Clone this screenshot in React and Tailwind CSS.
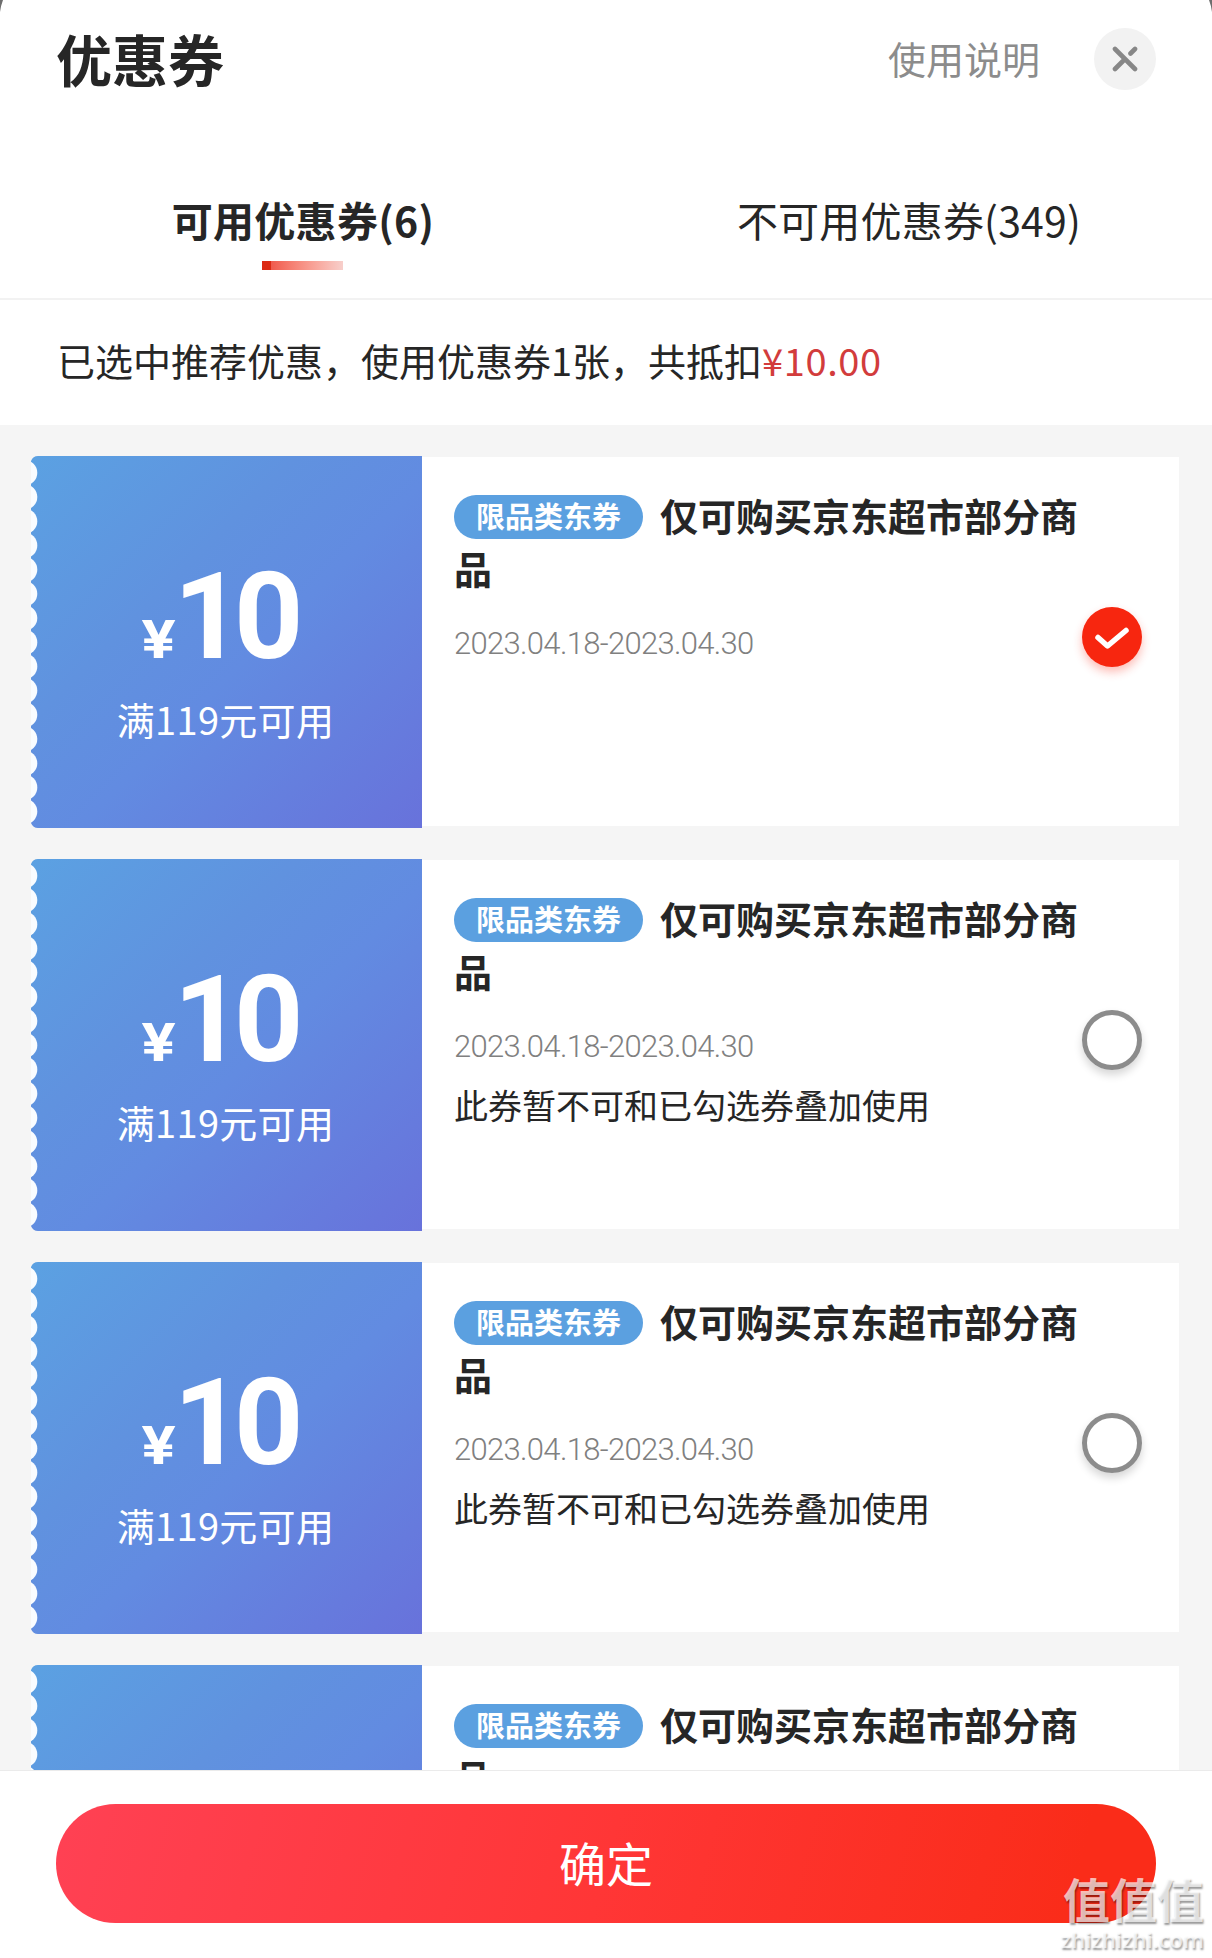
import React, { useState } from "react";

const COUPONS = [
  { id: 1, amount: 10, limit: "满119元可用", note: "" },
  { id: 2, amount: 10, limit: "满119元可用", note: "此券暂不可和已勾选券叠加使用" },
  { id: 3, amount: 10, limit: "满119元可用", note: "此券暂不可和已勾选券叠加使用" },
  { id: 4, amount: 10, limit: "满119元可用", note: "此券暂不可和已勾选券叠加使用" },
];

const NOTCHES = Array.from({ length: 15 }, (_, i) => 16.8 + i * 24.2);

export default function App() {
  const [selected, setSelected] = useState(1);

  return (
    <div className="relative flex h-[1958px] w-[1212px] flex-col overflow-hidden bg-white font-['Noto_Sans_CJK_SC',sans-serif] text-[#262626]">
      <SheetCorners />
      <Header />
      <Tabs />
      <div className="flex h-[125px] shrink-0 items-center pb-[5px] pl-[57px] text-[38px] leading-none">
        <span>已选中推荐优惠，使用优惠券1张，共抵扣</span>
        <span className="tracking-[0.6px] text-[#d23c3c]">¥10.00</span>
      </div>
      <div className="flex h-[1345px] shrink-0 flex-col gap-[31px] overflow-hidden bg-[#f5f5f5] pt-[31px] pr-[33px] pl-[31px]">
        {COUPONS.map((c) => (
          <Coupon key={c.id} coupon={c} checked={selected === c.id} onSelect={() => setSelected(c.id)} />
        ))}
      </div>
      <div className="flex h-[188px] shrink-0 flex-col border-t border-[#ebebeb] px-[56px] pt-[33px]">
        <button className="h-[119px] rounded-full bg-linear-[105deg,#ff4154,#ff3636_50%,#fa2c19_92%] pb-[5px] text-[47px] leading-none text-white">
          确定
        </button>
      </div>
      <Watermark />
    </div>
  );
}

function SheetCorners() {
  return (
    <>
      <svg className="absolute top-0 left-0 h-3 w-[3px]" viewBox="0 0 3 12">
        <path d="M0 0h3Q1 5 0 12z" fill="#6e6e6e" />
      </svg>
      <svg className="absolute top-0 right-0 h-3 w-[3px]" viewBox="0 0 3 12">
        <path d="M3 0H0Q2 5 3 12z" fill="#6e6e6e" />
      </svg>
    </>
  );
}

function Header() {
  return (
    <div className="flex h-[118px] shrink-0 items-center pr-[56px] pl-[56px]">
      <h1 className="pb-0.5 text-[56px] leading-none font-bold">优惠券</h1>
      <span className="ml-auto pb-0.5 text-[38px] leading-none text-[#8c8c8c]">使用说明</span>
      <button className="ml-[54px] flex size-[62px] items-center justify-center rounded-full bg-[#f2f2f2]">
        <svg className="size-[26px]" viewBox="0 0 26 26" fill="none" stroke="#878787" strokeWidth="4.6" strokeLinecap="round">
          <path d="M3 3l20 20M3 23l10-10M18.5 7.5L23 3" />
        </svg>
      </button>
    </div>
  );
}

function Tabs() {
  return (
    <div className="grid h-[182px] shrink-0 grid-cols-2 border-b-2 border-[#f2f2f2] text-[41px] leading-none">
      <div className="flex flex-col items-center pt-[81px] font-bold">
        <span className="tracking-[0.3px]">可用优惠券(6)</span>
        <span className="mt-[21px] mr-px h-[9px] w-[81px] bg-linear-to-r from-[#dc2a14] from-11% via-[#f0594c] via-11% to-[#f7cfcb]" />
      </div>
      <div className="flex flex-col items-center pt-[81px]">
        <span className="tracking-[0.2px]">不可用优惠券(349)</span>
      </div>
    </div>
  );
}

function Coupon({ coupon, checked, onSelect }) {
  return (
    <div className="flex h-[372px] shrink-0">
      <div className="relative flex w-[391px] shrink-0 flex-col items-center bg-linear-[135deg,#5ba1e2,#6092df_35%,#628be1_55%,#6872db]">
        <TicketEdge />
        <div className="mt-[101px] flex items-baseline pr-[18px] font-[Roboto] font-bold text-white">
          <span className="mr-px ml-[3px] inline-block scale-x-[1.18] text-[54px] leading-none">¥</span>
          <span className="text-[121px] leading-[121px] tracking-[-9px]">{coupon.amount}</span>
        </div>
        <div className="mt-[22px] mr-0.5 text-[38px] leading-none tracking-[0.3px] text-white">{coupon.limit}</div>
      </div>
      <div className="mt-px mb-[2px] flex grow bg-white pl-8">
        <div className="w-[640px] pt-[31px]">
          <div className="text-[38px] leading-[53px] font-bold">
            <span className="mr-[17px] inline-flex h-[44px] w-[189px] items-center justify-center rounded-full bg-[#5ba0e0] pb-0.5 align-[3px] text-[29px] leading-none text-white">
              限品类东券
            </span>
            仅可购买京东超市部分商品
          </div>
          <div className="mt-[31px] font-[Roboto] text-[31px] leading-[38px] font-light tracking-[-0.67px] text-[#808080]">
            2023.04.18-2023.04.30
          </div>
          <div className="mt-[15px] text-[34px] leading-[48px]">{coupon.note}</div>
        </div>
        <button onClick={onSelect} className="mt-[150px] -ml-3 size-[60px] rounded-full">
          {checked ? <CheckedDot /> : <span className="block size-[60px] rounded-full border-[5px] border-[#8c8c8c] shadow-[0_5px_9px_rgba(0,0,0,0.16)]" />}
        </button>
      </div>
    </div>
  );
}

// scalloped left side of the ticket
function TicketEdge() {
  return (
    <svg className="absolute top-0 left-0 h-[372px] w-[7px]" viewBox="0 0 7 372">
      <path d="M0 0h7Q2 0 0 5zM0 372h7Q2 372 0 367z" fill="#f5f5f5" />
      {NOTCHES.map((y) => (
        <circle key={y} cx="-6.5" cy={y} r="12.8" fill="#f9fcff" />
      ))}
    </svg>
  );
}

function CheckedDot() {
  return (
    <span className="flex size-[60px] items-center justify-center rounded-full bg-[#f7260f] shadow-[0_5px_10px_rgba(247,38,15,0.3)]">
      <svg className="h-[26px] w-[36px]" viewBox="0 0 36 26" fill="none" stroke="#fff" strokeWidth="5.5" strokeLinecap="round" strokeLinejoin="round">
        <path d="M4 13.5l9.5 8.5L32 6.5" />
      </svg>
    </span>
  );
}

function Watermark() {
  return (
    <div className="absolute top-[1872px] right-[8px] flex flex-col items-end text-white/70 [text-shadow:1px_2px_2px_rgba(0,0,0,0.4)]">
      <span className="text-[47px] leading-[52px] font-bold">值值值</span>
      <span className="font-['Open_Sans'] text-[22px] leading-[30px] font-semibold">zhizhizhi.com</span>
    </div>
  );
}
